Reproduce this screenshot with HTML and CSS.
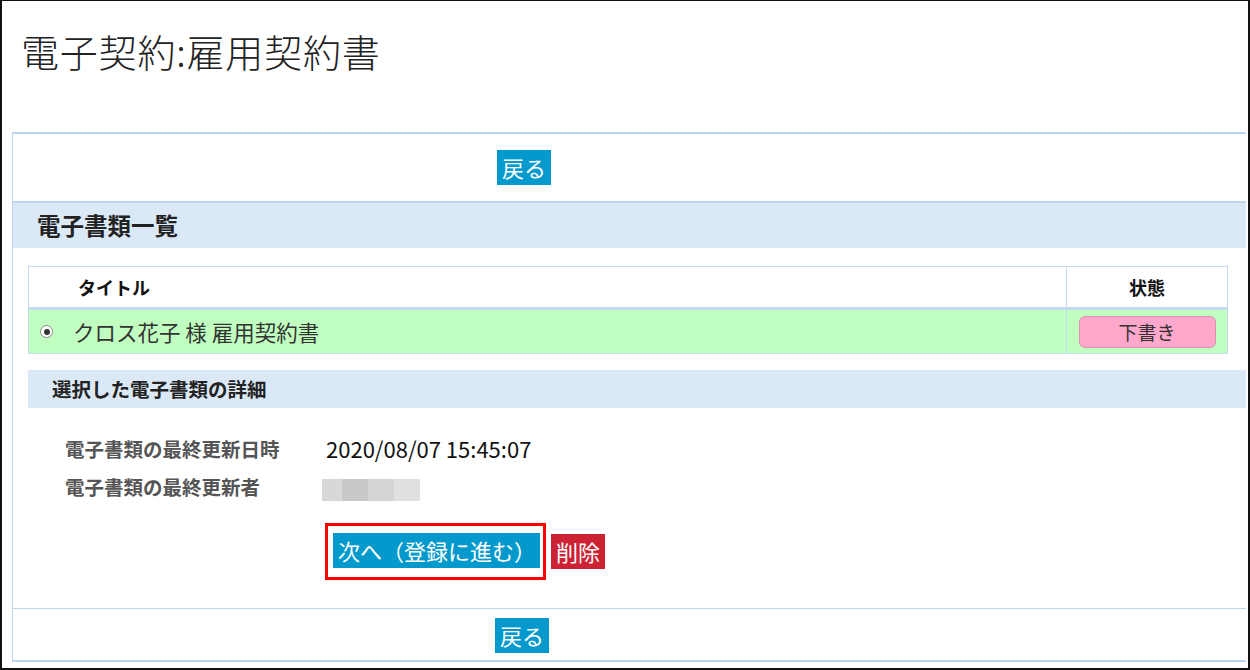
FILE: index.html
```html
<!DOCTYPE html>
<html lang="ja">
<head>
<meta charset="utf-8">
<title>電子契約:雇用契約書</title>
<link rel="stylesheet" href="styles.css">
</head>
<body>
<div class="frame">
  <h1 class="page-title">電子契約:雇用契約書</h1>
  <div class="panel">
    <div class="bar bar-top"><button class="btn btn-blue">戻る</button></div>
    <div class="section-head">電子書類一覧</div>
    <table class="doc-table">
      <thead>
        <tr><th class="col-title">タイトル</th><th class="col-state">状態</th></tr>
      </thead>
      <tbody>
        <tr class="selected">
          <td class="cell-title"><div class="title-wrap"><span class="radio"><span class="radio-dot"></span></span>クロス花子 様 雇用契約書</div></td>
          <td class="cell-state"><span class="badge">下書き</span></td>
        </tr>
      </tbody>
    </table>
    <div class="detail">
      <div class="sub-head">選択した電子書類の詳細</div>
      <div class="detail-grid">
        <div class="label">電子書類の最終更新日時</div>
        <div class="value">2020/08/07 15:45:07</div>
        <div class="label">電子書類の最終更新者</div>
        <div class="value"><span class="blur"><i class="b1"></i><i class="b2"></i><i class="b3"></i><i class="b4"></i></span></div>
      </div>
      <div class="actions">
        <span class="highlight"><button class="btn btn-blue btn-next">次へ（登録に進む）</button></span>
        <button class="btn btn-red">削除</button>
      </div>
    </div>
    <div class="bar bar-bottom"><button class="btn btn-blue">戻る</button></div>
  </div>
</div>
</body>
</html>
```

FILE: styles.css
```css
html, body {
  margin: 0;
  padding: 0;
  background: #fff;
}
body {
  font-family: "Noto Sans CJK JP", "Noto Sans", sans-serif;
  color: #333;
}
.frame {
  box-sizing: border-box;
  width: 1250px;
  height: 670px;
  border: 2px solid #111;
  border-top-width: 1px;
  overflow: hidden;
  padding: 0 0 0 10px;
}
.page-title {
  margin: 0;
  padding: 23px 0 0 9px;
  height: 131px;
  box-sizing: border-box;
  font-size: 38px;
  font-weight: 300;
  line-height: 54px;
  letter-spacing: 0.8px;
  color: #222;
}
.panel {
  width: 1234px;
  box-sizing: border-box;
  border: 1px solid #bcd6f2;
  border-top-width: 2px;
  border-right: none;
  border-bottom-width: 2px;
}
.bar {
  display: flex;
}
.bar-top {
  padding: 16px 0 16px 484px;
  border-bottom: 2px solid #bcd6f2;
}
.bar-bottom {
  padding: 9px 0 7px 482px;
  border-top: 1px solid #bcd6f2;
}
.btn {
  border: none;
  margin: 0;
  font-family: inherit;
  font-size: 22px;
  color: #fff;
  line-height: 35px;
  height: 35px;
  padding: 0 5px;
  cursor: pointer;
}
.btn-blue { background: #0399cd; }
.btn-red { background: #cc2233; padding: 0 5px; }
.section-head {
  background: #dbe9f7;
  height: 45px;
  line-height: 45px;
  padding-left: 24px;
  font-size: 23.5px;
  font-weight: bold;
  color: #222;
}
.doc-table {
  margin: 18px 0 0 15px;
  width: 1200px;
  border-collapse: collapse;
  font-size: 18px;
}
.doc-table th {
  height: 40px;
  font-weight: bold;
  color: #111;
  border: 1px solid #c4daf3;
  border-bottom: 3px solid #c4daf3;
  padding: 0;
  vertical-align: middle;
}
.doc-table th.col-title {
  text-align: left;
  padding-left: 49px;
}
.doc-table th.col-state {
  width: 160px;
}
.doc-table td {
  height: 43px;
  border: 1px solid #c4daf3;
  padding: 0;
  vertical-align: middle;
}
.selected td { background: #c0ffc0; }
.title-wrap {
  font-size: 21.5px;
  color: #333;
  padding-left: 11px;
  display: flex;
  align-items: center;
}
.radio {
  display: inline-flex;
  align-items: center;
  justify-content: center;
  width: 11px;
  height: 11px;
  border: 1px solid #888;
  border-radius: 50%;
  background: #fff;
  margin: 0 20px 0 0;
}
.radio-dot {
  width: 6px;
  height: 6px;
  border-radius: 50%;
  background: #333;
}
.cell-state { text-align: center; }
.badge {
  display: inline-block;
  box-sizing: border-box;
  width: 137px;
  height: 32px;
  line-height: 30px;
  background: #ffa8cc;
  border: 1px solid #dd8fae;
  border-radius: 6px;
  font-size: 19px;
  color: #333;
  vertical-align: middle;
}
.detail {
  margin: 16px 0 0 15px;
}
.sub-head {
  background: #dbe9f7;
  height: 38px;
  line-height: 38px;
  padding-left: 24px;
  font-size: 19.5px;
  font-weight: bold;
  color: #222;
}
.detail-grid {
  display: grid;
  grid-template-columns: 261px auto;
  grid-auto-rows: 38px;
  padding: 21px 0 0 37px;
  align-items: center;
}
.label {
  font-size: 19.5px;
  font-weight: bold;
  color: #555;
}
.value {
  font-size: 22px;
  color: #111;
}
.blur {
  display: inline-flex;
  margin-left: -4px;
  height: 22px;
  vertical-align: middle;
}
.blur i { display: block; height: 22px; }
.blur .b1 { width: 20px; background: #d8d8d8; }
.blur .b2 { width: 26px; background: #c8c8c8; }
.blur .b3 { width: 26px; background: #d4d4d4; }
.blur .b4 { width: 26px; background: #e0e0e0; }
.actions {
  display: flex;
  align-items: center;
  padding: 18px 0 28px 297px;
}
.highlight {
  display: inline-flex;
  border: 3px solid #ff0000;
  padding: 7px 3px 9px 5px;
}
.btn-next { padding: 0 4px 0 5px; }
.actions .btn-red { margin-left: 5px; }
```
